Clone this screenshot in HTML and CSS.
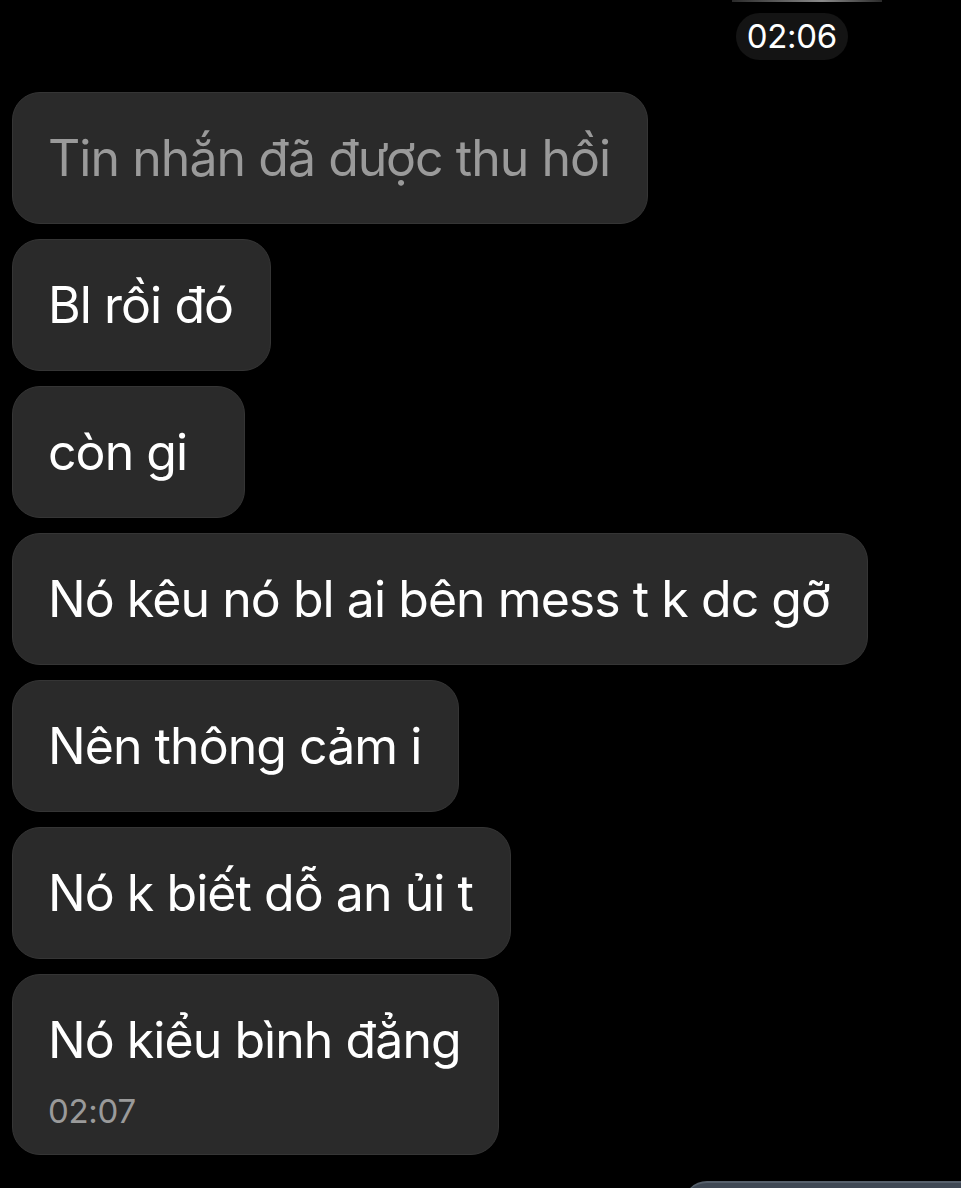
FILE: index.html
```html
<!DOCTYPE html>
<html lang="vi">
<head>
<meta charset="utf-8">
<title>Chat</title>
<link rel="stylesheet" href="styles.css">
</head>
<body>
<div class="screen">
  <div class="topline"></div>
  <div class="time-row"><span class="time-pill">02:06</span></div>
  <div class="messages">
    <div class="bubble recalled">Tin nhắn đã được thu hồi</div>
    <div class="bubble">Bl rồi đó</div>
    <div class="bubble">còn gi</div>
    <div class="bubble">Nó kêu nó bl ai bên mess t k dc gỡ</div>
    <div class="bubble">Nên thông cảm i</div>
    <div class="bubble">Nó k biết dỗ an ủi t</div>
    <div class="bubble last">
      <div>Nó kiểu bình đẳng</div>
      <div class="stamp">02:07</div>
    </div>
    <div class="outgoing"></div>
  </div>
</div>
</body>
</html>
```
FILE: styles.css
```css
html, body {
  margin: 0;
  padding: 0;
  background: #000;
  height: 100%;
  overflow: hidden;
}
.screen {
  font-family: Inter, "Noto Sans", "Liberation Sans", sans-serif;
  color: #fff;
  display: flex;
  flex-direction: column;
}
.topline {
  width: 150px;
  height: 2px;
  margin-left: 732px;
  background: linear-gradient(90deg, #2a2a2a, #8a8a8a 60%, #2a2a2a);
}
.time-row {
  display: flex;
  justify-content: flex-end;
  padding-right: 113px;
  margin-top: 11px;
}
.time-pill {
  background: #141414;
  border-radius: 24px;
  height: 47px;
  line-height: 47px;
  padding: 0 11px;
  font-size: 33px;
  letter-spacing: -0.3px;
  color: #fff;
}
.messages {
  display: flex;
  flex-direction: column;
  align-items: flex-start;
  gap: 15px;
  padding: 0 12px;
  margin-top: 32px;
}
.bubble {
  box-sizing: border-box;
  min-width: 233px;
  background: #2a2a2a;
  border: 1px solid #353535;
  border-radius: 28px;
  padding: 35px 37px 35px 35px;
  font-size: 50px;
  line-height: 60px;
  letter-spacing: -0.95px;
  color: #fff;
  white-space: nowrap;
}
.bubble.recalled {
  color: #9a9a9a;
}
.bubble.last {
  padding-bottom: 23px;
}
.stamp {
  font-size: 33px;
  line-height: 40px;
  letter-spacing: -0.3px;
  color: #9a9a9a;
  margin-top: 21px;
}
.outgoing {
  align-self: flex-end;
  margin-right: -12px;
  margin-top: 11px;
  width: 278px;
  height: 60px;
  background: #3f4854;
  border-top: 2px solid #56606c;
  border-radius: 24px 0 0 0;
}
```
